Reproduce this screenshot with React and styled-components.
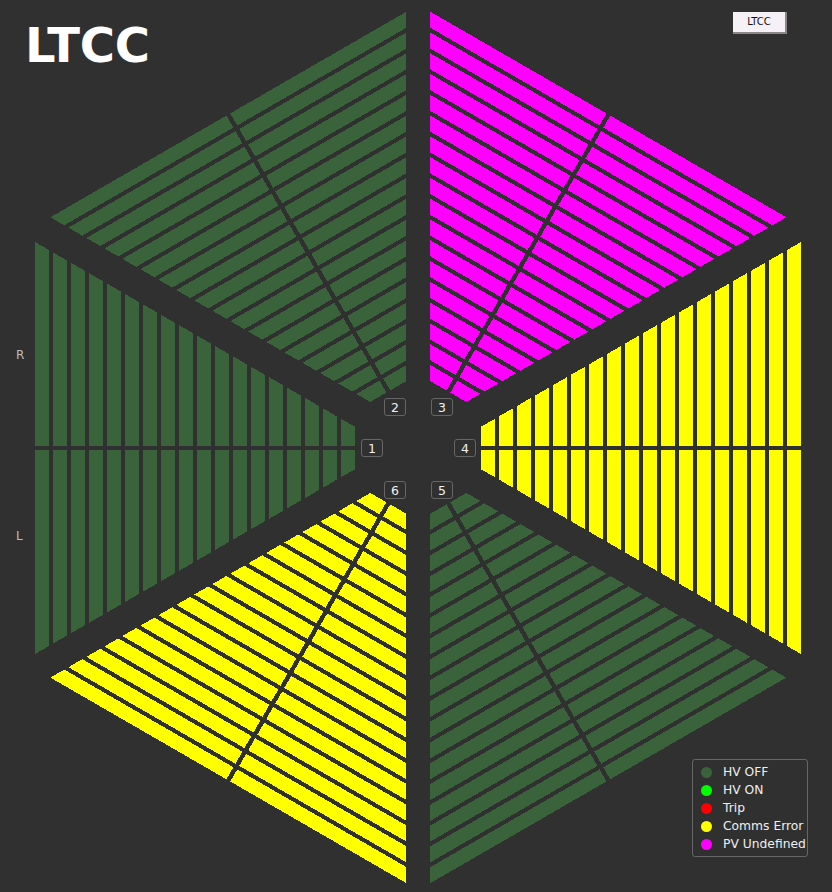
import React from "react";
import styled, { createGlobalStyle } from "styled-components";

const GREEN = "#3b633b";
const YELLOW = "#ffff00";
const MAGENTA = "#ff00ff";

const Global = createGlobalStyle`
  html, body { margin: 0; padding: 0; background: #303030; }
  body { font-family: "DejaVu Sans", sans-serif; }
`;

const Display = styled.main`
  position: relative;
  isolation: isolate;
  width: 832px;
  height: 892px;
  overflow: hidden;
  background: #303030;
  display: flex;
  flex-direction: column;
`;

const Chart = styled.svg`
  position: absolute;
  inset: 0;
  z-index: -1;
`;

const Header = styled.header`
  display: flex;
  justify-content: space-between;
  align-items: flex-start;
  padding: 12px 45px 0 25px;
  height: 62px;
`;

const Title = styled.h1`
  margin: 4px 0 0;
  font: bold 48px/58px "DejaVu Sans", sans-serif;
  color: #fff;
  letter-spacing: -0.3px;
`;

const DetectorButton = styled.button`
  width: 54px;
  height: 22px;
  padding: 0 0 2px;
  box-sizing: border-box;
  border: 0;
  border-right: 2px solid #8a868a;
  border-bottom: 2px solid #8a868a;
  background: #f6f1f6;
  color: #111;
  font: 10px "DejaVu Sans", sans-serif;
`;

const SideLabels = styled.div`
  display: flex;
  flex-direction: column;
  gap: 167px;
  margin-top: 274px;
  padding-left: 16px;
`;

const SideLabel = styled.span`
  font: 12px/14px "DejaVu Sans", sans-serif;
  color: #bdbdbd;
`;

const SectorBadge = styled.span`
  position: absolute;
  left: ${(p) => p.$x}px;
  top: ${(p) => p.$y}px;
  width: 22px;
  height: 18px;
  box-sizing: border-box;
  display: flex;
  align-items: center;
  justify-content: center;
  border: 1px solid #666;
  border-radius: 3px;
  color: #f0f0f0;
  font: 12.5px "DejaVu Sans", sans-serif;
`;

const Legend = styled.ul`
  margin: auto 24px 35px 0;
  align-self: flex-end;
  width: 116px;
  height: 98px;
  box-sizing: border-box;
  padding: 3px 0 0 8px;
  list-style: none;
  border: 1px solid #666;
  border-radius: 3px;
  display: flex;
  flex-direction: column;
`;

const LegendRow = styled.li`
  display: flex;
  align-items: center;
  gap: 11px;
  height: 18px;
  font: 12.3px "DejaVu Sans", sans-serif;
  color: #eee;
  white-space: nowrap;
`;

const Dot = styled.i`
  width: 11px;
  height: 11px;
  border-radius: 50%;
  background: ${(p) => p.$color};
  flex: none;
`;

const SECTORS = [
  { id: 1, o: [35, 448], a: 0, color: GREEN },
  { id: 2, o: [228.35, 114.5], a: 60, color: GREEN },
  { id: 3, o: [608.35, 114.5], a: 120, color: MAGENTA },
  { id: 4, o: [801, 448], a: 180, color: YELLOW },
  { id: 5, o: [608.35, 780.35], a: 240, color: GREEN },
  { id: 6, o: [228.35, 780.35], a: 300, color: YELLOW },
];

const BADGES = [
  { n: 1, x: 361, y: 439 },
  { n: 2, x: 384, y: 398 },
  { n: 3, x: 431, y: 398 },
  { n: 4, x: 454, y: 439 },
  { n: 5, x: 431, y: 481 },
  { n: 6, x: 384, y: 481 },
];

const LEGEND = [
  ["HV OFF", GREEN],
  ["HV ON", "#00ff00"],
  ["Trip", "#ff0000"],
  ["Comms Error", YELLOW],
  ["PV Undefined", MAGENTA],
];

const SLOPE = Math.tan(Math.PI / 6);

function barPolygons({ o, a }) {
  const diagonal = a % 180 !== 0;
  const half = diagonal ? 205.5 : 206;
  const barWidth = diagonal ? 13.9 : 14;
  const split = diagonal ? 2.2 : 2;
  const rad = (a * Math.PI) / 180;
  const d = [Math.cos(rad), Math.sin(rad)];
  const n = [-Math.sin(rad), Math.cos(rad)];
  const pt = (u, v) =>
    `${(o[0] + u * d[0] + v * n[0]).toFixed(2)},${(o[1] + u * d[1] + v * n[1]).toFixed(2)}`;
  const polys = [];
  for (let i = 0; i < 18; i++) {
    const u0 = 18 * i;
    const u1 = u0 + barWidth;
    const h0 = half - u0 * SLOPE;
    const h1 = half - u1 * SLOPE;
    polys.push([pt(u0, -h0), pt(u1, -h1), pt(u1, -split), pt(u0, -split)].join(" "));
    polys.push([pt(u0, split), pt(u1, split), pt(u1, h1), pt(u0, h0)].join(" "));
  }
  return polys;
}

export default function App() {
  return (
    <Display>
      <Global />
      <Chart width="832" height="892" viewBox="0 0 832 892" shapeRendering="crispEdges">
        {SECTORS.map((s) => (
          <g key={s.id} fill={s.color}>
            {barPolygons(s).map((p, i) => (
              <polygon key={i} points={p} />
            ))}
          </g>
        ))}
      </Chart>
      <Header>
        <Title>LTCC</Title>
        <DetectorButton>LTCC</DetectorButton>
      </Header>
      <SideLabels>
        <SideLabel>R</SideLabel>
        <SideLabel>L</SideLabel>
      </SideLabels>
      {BADGES.map((b) => (
        <SectorBadge key={b.n} $x={b.x} $y={b.y}>{b.n}</SectorBadge>
      ))}
      <Legend>
        {LEGEND.map(([label, color]) => (
          <LegendRow key={label}>
            <Dot $color={color} />
            {label}
          </LegendRow>
        ))}
      </Legend>
    </Display>
  );
}
